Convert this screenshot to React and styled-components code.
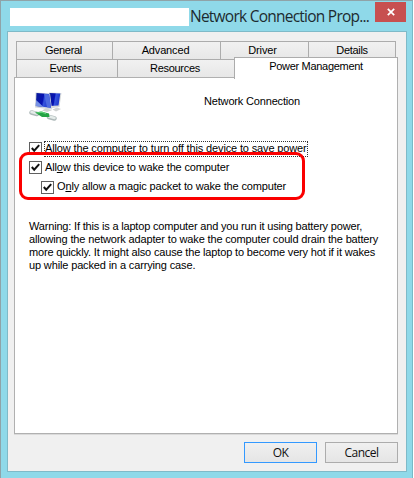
import React from "react";
import styled, { createGlobalStyle } from "styled-components";

const GlobalStyle = createGlobalStyle`
  * { box-sizing: border-box; }
  body { margin: 0; background: #fff; }
`;

const Window = styled.div`
  width: 413px;
  height: 478px;
  padding: 0 6px 0 6px;
  background: #8fd9e9;
  border: 1px solid #79b9c6;
  border-left-color: #8fa3a8;
  border-top-color: #8fa3a8;
  border-bottom: 0;
  display: flex;
  flex-direction: column;
  color: #000;
  font: 11px/13px "Liberation Sans", Arial, sans-serif;
`;

const TitleBar = styled.header`
  height: 30px;
  flex: none;
  display: flex;
  align-items: flex-start;
  white-space: nowrap;
`;

const DeviceName = styled.div`
  width: 179px;
  height: 18px;
  margin: 7px 0 0 3px;
  background: #fff;
`;

const Title = styled.h1`
  width: 186px;
  margin: 4px 0 0 1px;
  font: 400 15.5px/22px "Open Sans", "Segoe UI", sans-serif;
  letter-spacing: -0.76px;
  color: #1d2b30;
`;

const CloseButton = styled.button`
  width: 31px;
  height: 20px;
  margin: 1px 0 0 -1px;
  padding: 0;
  border: 0;
  background: #c75050;
  display: flex;
  align-items: center;
  justify-content: center;
`;

const Body = styled.main`
  width: 400px;
  height: 441px;
  padding: 9px 0 0 6px;
  border: 1px solid #7fbac8;
  background: #f0f0f0;
`;

const TabRow = styled.div`
  display: flex;
  height: 18px;
  margin-left: 2px;
`;

const Tab = styled.div`
  width: ${(p) => p.$w}px;
  height: 18px;
  padding-right: ${(p) => p.$shift || 0}px;
  border: 1px solid #acacac;
  border-bottom: 0;
  margin-right: -1px;
  background: linear-gradient(#f1f1f1, #e7e7e7);
  font-size: 11px;
  line-height: 17px;
  letter-spacing: ${(p) => p.$ls ?? -0.3}px;
  text-align: center;
  white-space: nowrap;
`;

const ActiveTab = styled(Tab)`
  height: 22px;
  margin-top: -2px;
  background: #fff;
  position: relative;
  z-index: 1;
`;

const Page = styled.section`
  width: 384px;
  height: 357px;
  padding: 13px 0 0 14px;
  border: 1px solid #b0b0b0;
  box-shadow: 0 1px 0 #dadada;
  background: #fff;
  position: relative;
  z-index: 0;
`;

const DeviceRow = styled.div`
  display: flex;
  align-items: flex-start;
  height: 48px;
`;

const DeviceLabel = styled.div`
  margin: 4px 0 0 141px;
  letter-spacing: ${(p) => p.$ls}px;
`;

const CheckRow = styled.label`
  display: flex;
  align-items: center;
  height: ${(p) => p.$h || 19}px;
  padding-left: ${(p) => p.$indent || 0}px;
`;

const Box = styled.span`
  width: 13px;
  height: 13px;
  flex: none;
  border: 1px solid #606060;
  background: #fff;
  display: flex;
`;

const CheckText = styled.span`
  margin-left: 2px;
  padding: 0 0 1px 0;
  line-height: 13px;
  border: 1px dotted ${(p) => (p.$focus ? "#333" : "transparent")};
  letter-spacing: ${(p) => p.$ls}px;
  white-space: nowrap;
`;

const Highlight = styled.div`
  position: absolute;
  left: 4px;
  top: 74px;
  width: 286px;
  height: 48px;
  border: 3px solid #fb0000;
  border-radius: 9px;
`;

const Warning = styled.p`
  margin: 23px 0 0;
`;

const Line = styled.span`
  display: block;
  white-space: nowrap;
  letter-spacing: ${(p) => p.$ls}px;
`;

const Footer = styled.footer`
  display: flex;
  gap: 8px;
  margin: 8px 0 0 230px;
`;

const Button = styled.button`
  width: 73px;
  height: 21px;
  padding: 0;
  border: 1px solid ${(p) => (p.$primary ? "#3399ff" : "#acacac")};
  background: linear-gradient(#f0f0f0, #e5e5e5);
  color: #111;
  font: 12px/18px "Open Sans", "Segoe UI", sans-serif;
  letter-spacing: -0.5px;
`;

const Check = () => (
  <Box>
    <svg width="11" height="11" viewBox="0 0 11 11">
      <path d="M1.8 5 4.2 7.7 9.2 2.2" fill="none" stroke="#111" strokeWidth="2" />
    </svg>
  </Box>
);

const NetworkIcon = () => (
  <svg width="34" height="32" viewBox="0 0 34 32">
    <defs>
      <linearGradient id="screen" x1="0" y1="0.4" x2="1" y2="0.6">
        <stop offset="0" stopColor="#0a1a9c" />
        <stop offset="0.45" stopColor="#0612b4" />
        <stop offset="0.55" stopColor="#3553dc" />
        <stop offset="1" stopColor="#1730c8" />
      </linearGradient>
    </defs>
    <path d="M20 1.5 32.5 2 30.5 16 21 17.5Z" fill="#d9dcdc" />
    <path d="M20 2 31.3 2.5 29.5 14.5 20.5 15Z" fill="url(#screen)" />
    <path d="M23.5 18.5 28 16.5 32 18 27 20.5Z" fill="#cfd2d2" />
    <path d="M6.5 1.5 21 2.5 23 18.5 6 16.5Z" fill="#d3d8dd" />
    <path d="M7.5 2 20.2 3 22 16.8 6.8 15Z" fill="url(#screen)" />
    <path d="M15 3 20.2 3.3 22 16.8 18 16.3Z" fill="#4d6be0" />
    <path d="M7.1 9 14.5 15.9 6.8 15Z" fill="#7893e6" />
    <path d="M13 19.5 17 17.3 23 19.2 18 21Z" fill="#cfd2d2" />
    <path d="M2.5 21.5 8 23M20 26 25.5 27.5" stroke="#aeb9b9" strokeWidth="4.5" strokeLinecap="round" />
    <path d="M2.5 21 8 22.5M20 25.5 25.5 27" stroke="#e4ebe9" strokeWidth="2.5" strokeLinecap="round" />
    <path d="M6 21.5 12 20.5 20 22.5 20.5 26 13 26Z" fill="#23a244" />
    <path d="M8 22 13 21.2 17 22.8" fill="none" stroke="#5fd078" strokeWidth="1.2" />
  </svg>
);

export default function App() {
  return (
    <>
      <GlobalStyle />
      <Window>
        <TitleBar>
          <DeviceName />
          <Title>Network Connection Prop...</Title>
          <CloseButton aria-label="Close">
            <svg width="8" height="8" viewBox="0 0 8 8">
              <path d="M.8.8 7.2 7.2M7.2.8.8 7.2" stroke="#fff" strokeWidth="1.7" />
            </svg>
          </CloseButton>
        </TitleBar>
        <Body>
          <TabRow>
            <Tab $w={97} $shift={2}>General</Tab>
            <Tab $w={109} $shift={2} $ls={-0.15}>Advanced</Tab>
            <Tab $w={89} $shift={4} $ls={-0.15}>Driver</Tab>
            <Tab $w={88}>Details</Tab>
          </TabRow>
          <TabRow>
            <Tab $w={102} $shift={3}>Events</Tab>
            <Tab $w={118} $shift={2}>Resources</Tab>
            <ActiveTab $w={164}>Power Management</ActiveTab>
          </TabRow>
          <Page>
            <DeviceRow>
              <NetworkIcon />
              <DeviceLabel $ls={-0.17}>Network Connection</DeviceLabel>
            </DeviceRow>
            <CheckRow>
              <Check />
              <CheckText $focus $ls={-0.14}><u>A</u>llow the computer to turn off this device to save power</CheckText>
            </CheckRow>
            <CheckRow>
              <Check />
              <CheckText $ls={-0.14}>All<u>o</u>w this device to wake the computer</CheckText>
            </CheckRow>
            <CheckRow $h={20} $indent={12}>
              <Check />
              <CheckText $ls={-0.15}>O<u>n</u>ly allow a magic packet to wake the computer</CheckText>
            </CheckRow>
            <Highlight />
            <Warning>
              <Line $ls={-0.18}>Warning: If this is a laptop computer and you run it using battery power,</Line>
              <Line $ls={-0.15}>allowing the network adapter to wake the computer could drain the battery</Line>
              <Line $ls={-0.16}>more quickly. It might also cause the laptop to become very hot if it wakes</Line>
              <Line $ls={-0.14}>up while packed in a carrying case.</Line>
            </Warning>
          </Page>
          <Footer>
            <Button $primary>OK</Button>
            <Button>Cancel</Button>
          </Footer>
        </Body>
      </Window>
    </>
  );
}
